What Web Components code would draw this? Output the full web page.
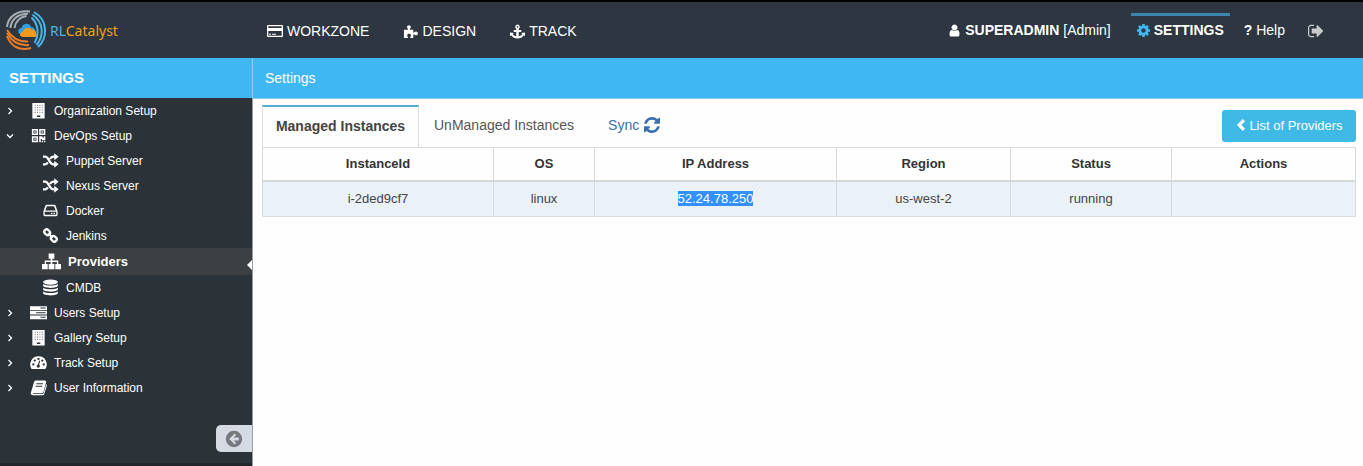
<!DOCTYPE html>
<html lang="en">
<head>
<meta charset="utf-8">
<meta name="viewport" content="width=device-width, initial-scale=1">
<title>RLCatalyst - Settings</title>
<style>
  body { margin: 0; font-family: "Liberation Sans", Arial, sans-serif; font-size: 13px; color: #333; background: #fefefe; }
</style>
</head>
<body>
<app-shell>
  <app-header slot="header">
    <nav-item icon="card">WORKZONE</nav-item>
    <nav-item icon="puzzle">DESIGN</nav-item>
    <nav-item icon="anchor">TRACK</nav-item>
    <nav-item slot="user" icon="user"><b>SUPERADMIN</b> [Admin]</nav-item>
    <nav-item slot="user" icon="cog" active><b>SETTINGS</b></nav-item>
    <nav-item slot="user"><b>?</b> Help</nav-item>
    <nav-item slot="user" icon="signout" label="Log out"></nav-item>
  </app-header>
  <side-menu slot="side" heading="SETTINGS">
    <side-item arrow="right" icon="building">Organization Setup</side-item>
    <side-item arrow="down" icon="qrcode">DevOps Setup</side-item>
    <side-item level="2" icon="random">Puppet Server</side-item>
    <side-item level="2" icon="random">Nexus Server</side-item>
    <side-item level="2" icon="hdd">Docker</side-item>
    <side-item level="2" icon="chain">Jenkins</side-item>
    <side-item level="2" icon="sitemap" active>Providers</side-item>
    <side-item level="2" icon="database">CMDB</side-item>
    <side-item arrow="right" icon="server">Users Setup</side-item>
    <side-item arrow="right" icon="building">Gallery Setup</side-item>
    <side-item arrow="right" icon="gauge">Track Setup</side-item>
    <side-item arrow="right" icon="book">User Information</side-item>
  </side-menu>
  <page-ribbon>Settings</page-ribbon>
  <instances-panel></instances-panel>
</app-shell>

<script>
const ICONS = {
  user: ['128 64 1536 1664', '<path d="M1536 1399q0 109-62.5 187t-150.5 78h-854q-88 0-150.5-78t-62.5-187q0-85 8.5-160.5t31.5-152 58.5-131 94-89 134.5-34.5q131 128 313 128t313-128q76 0 134.5 34.5t94 89 58.5 131 31.5 152 8.5 160.5zm-256-887q0 159-112.5 271.5t-271.5 112.5-271.5-112.5-112.5-271.5 112.5-271.5 271.5-112.5 271.5 112.5 112.5 271.5z"/>'],
  cog: ['128 128 1536 1536', '<path d="M1152 896q0-106-75-181t-181-75-181 75-75 181 75 181 181 75 181-75 75-181zm512-109v222q0 12-8 23t-20 13l-185 28q-19 54-39 91 35 50 107 138 10 12 10 25t-9 23q-27 37-99 108t-94 71q-12 0-26-9l-138-108q-44 23-91 38-16 136-29 186-7 28-36 28h-222q-14 0-24.5-8.5t-11.5-21.5l-28-184q-49-16-90-37l-141 107q-10 9-25 9-14 0-25-11-126-114-165-168-7-10-7-23 0-12 8-23 15-21 51-66.5t54-70.5q-27-50-41-99l-183-27q-13-2-21-12.5t-8-23.5v-222q0-12 8-23t19-13l186-28q14-46 39-92-40-57-107-138-10-12-10-24 0-10 9-23 26-36 98.5-107.5t94.5-71.5q13 0 26 10l138 107q44-23 91-38 16-136 29-186 7-28 36-28h222q14 0 24.5 8.5t11.5 21.5l28 184q49 16 90 37l142-107q9-9 24-9 13 0 25 10 129 119 165 170 7 8 7 22 0 12-8 23-15 21-51 66.5t-54 70.5q26 50 41 98l183 28q13 2 21 12.5t8 23.5z"/>'],
  refresh: ['128 128 1536 1536', '<path d="M1639 1056q0 5-1 7-64 268-268 434.5t-478 166.5q-146 0-282.5-55t-243.5-157l-129 129q-19 19-45 19t-45-19-19-45v-448q0-26 19-45t45-19h448q26 0 45 19t19 45-19 45l-137 137q71 66 161 102t187 36q134 0 250-65t186-179q11-17 53-117 8-23 30-23h192q13 0 22.5 9.5t9.5 22.5zm25-800v448q0 26-19 45t-45 19h-448q-26 0-45-19t-19-45 19-45l138-138q-148-137-349-137-134 0-250 65t-186 179q-11 17-53 117-8 23-30 23h-199q-13 0-22.5-9.5t-9.5-22.5v-7q65-268 270-434.5t480-166.5q146 0 284 55.5t245 156.5l130-129q19-19 45-19t45 19 19 45z"/>'],
  signout: ['64 64 1664 1664', '<path d="M704 1440q0 4 1 20t.5 26.5-3 23.5-10 19.5-20.5 6.5h-320q-119 0-203.5-84.5t-84.5-203.5v-704q0-119 84.5-203.5t203.5-84.5h320q13 0 22.5 9.5t9.5 22.5q0 4 1 20t.5 26.5-3 23.5-10 19.5-20.5 6.5h-320q-66 0-113 47t-47 113v704q0 66 47 113t113 47h312l11.5 1 11.5 3 8 5.5 7 9 2 13.5zm928-544q0 26-19 45l-544 544q-19 19-45 19t-45-19-19-45v-288h-448q-26 0-45-19t-19-45v-384q0-26 19-45t45-19h448v-288q0-26 19-45t45-19 45 19l544 544q19 19 19 45z"/>'],
  card: ['0 0 16 16', '<path fill-rule="evenodd" d="M1 2h14a1 1 0 0 1 1 1v10a1 1 0 0 1-1 1H1a1 1 0 0 1-1-1V3a1 1 0 0 1 1-1zm.3 1.200v1.800h13.400V3.200zM1.300 8v4.800h13.400V8zM2 10.800h2v1H2zm3 0h4v1H5z"/>'],
  puzzle: ['0 0 16 16', '<path d="M1 6h4.500C5.400 5 4.300 4.500 4.300 3.200 4.300 2 5.200 1.200 6.300 1.200s2 .8 2 2C8.300 4.500 7.300 5 7.200 6H11v3.200c1.200 0 1.500-1.200 2.900-1.200 1.100 0 2 .8 2 2s-.9 2.100-2 2.100c-1.400 0-1.700-1.200-2.900-1.200V14.800H7.600c0-1.300.9-1.500.9-2.600 0-1-.9-1.700-2-1.700s-2 .7-2 1.700c0 1.100.9 1.300.9 2.600H1z"/>'],
  anchor: ['0 0 16 16', '<path fill-rule="evenodd" d="M8 .5a2.500 2.500 0 0 1 1.300 4.600V6.500H12v1.900H9.300v4.700c1.700-.3 3.100-1.100 3.800-2.200l-1.200-1.200L16 9v4.100l-1.200-1.200C13.400 14 10.900 15.500 8 15.500S2.600 14 1.200 11.900L0 13.100V9l4.100.7-1.200 1.200c.7 1.100 2.100 1.900 3.800 2.200V8.400H4V6.500h2.700V5.100A2.500 2.500 0 0 1 8 .5zm0 1.600a.9.9 0 1 0 0 1.800.9.9 0 0 0 0-1.800z"/>'],
  left: ['0 0 10 14', '<path d="M7 0 9.700 2.700 5.500 7l4.200 4.300L7 14 .3 7z"/>'],
  aright: ['0 0 8 8', '<path d="M2.500 1 5.500 4 2.500 7" fill="none" stroke="currentColor" stroke-width="1.300"/>'],
  adown: ['0 0 8 8', '<path d="M1 2.500 4 5.500 7 2.500" fill="none" stroke="currentColor" stroke-width="1.300"/>'],
  building: ['0 0 18 18', '<path fill-rule="evenodd" d="M2.500 1h13v16.500h-13zM7.300 14.300v1.700h3.600v-1.700z"/><path d="M5 3.500h9M5 6h9M5 8.500h9M5 11h9" stroke="#2b3339" stroke-width=".8" stroke-dasharray="1 1.500"/>'],
  qrcode: ['0 0 18 18', '<path fill-rule="evenodd" d="M2 2h6.500v6.500H2zm1.600 1.600v3.300h3.300V3.600zM9.700 2h6.500v6.500H9.700zm1.600 1.600v3.300h3.300V3.600zM2 9.700h6.500v6.500H2zm1.600 1.600v3.300h3.300v-3.300zM4.500 4.500h1.500v1.500H4.500zm7.700 0h1.500v1.500h-1.500zM4.500 12.200h1.500v1.500H4.500zM9.700 9.700h3.500v1.300h1.500V9.700h1.500v4.400h-3.600v-1.300h-1.200v3.400H9.700zm2.600 5.100h1.400v1.400h-1.400zm2.400 0h1.500v1.400h-1.500z"/>'],
  random: ['0 0 18 18', '<path d="M1 5h2.500c3.500 0 4.500 8 8.500 8h2M1 13h2.500c1.200 0 2-.8 2.700-2M8.500 7.500C9.300 6 10.400 5 12 5h2" fill="none" stroke="currentColor" stroke-width="2.400"/><path d="M13 1.200 17.600 5 13 8.800zM13 9.200l4.600 3.800-4.600 3.800z"/>'],
  hdd: ['0 0 18 18', '<path fill-rule="evenodd" d="M5 3h8c.7 0 1.200.3 1.400.9l1.900 5.400c.1.400.2.700.2 1.100v3.100c0 .8-.7 1.500-1.500 1.500H3c-.8 0-1.500-.7-1.500-1.500v-3.100c0-.4.1-.7.2-1.100l1.900-5.400C3.800 3.300 4.300 3 5 3zm.2 1.400L3.500 9h11l-1.700-4.600zM2.900 10.400v3.200h12.200v-3.200zM9.500 11.300h1.500v1.400H9.500zm2.700 0h1.500v1.400h-1.500z"/>'],
  chain: ['0 0 18 18', '<g fill="none" stroke="currentColor" stroke-width="2.400"><rect x="2.200" y="3.100" width="6.600" height="5" rx="2.400" transform="rotate(45 5.500 5.600)"/><rect x="9.200" y="9.900" width="6.600" height="5" rx="2.400" transform="rotate(45 12.500 12.400)"/><path d="M6.500 6.500l5 5" stroke-width="2"/></g>'],
  sitemap: ['0 0 18 18', '<path d="M6.300 1.500h5.400v5H9.800v1.600h5.600v3.200H18v5h-5.400v-5h1.500V9.500H9.800v1.800h1.900v5H6.300v-5h1.900V9.500H3.900v1.800h1.500v5H0v-5h2.600V8.100h5.600V6.500H6.300z"/>'],
  database: ['0 0 18 18', '<ellipse cx="9" cy="3.300" rx="7.800" ry="2.700"/><path d="M1.200 5.200c3.500 2.300 12.100 2.300 15.600 0v2c-1 3-14.600 3-15.600 0zM1.200 9.200c3.500 2.300 12.100 2.300 15.600 0v2c-1 3-14.600 3-15.600 0zM1.200 13.200c3.500 2.300 12.100 2.300 15.600 0v2c-1 3-14.600 3-15.600 0z"/>'],
  server: ['0 0 18 18', '<path fill-rule="evenodd" d="M0 2.300h18v4H0zm11 1.500v1h5.500v-1zM0 7.200h18v4H0zm6.500 1.500v1h10v-1zM0 12.100h18v4H0zm11 1.500v1h5.500v-1z"/>'],
  gauge: ['0 0 18 18', '<path fill-rule="evenodd" d="M9 2.500a8.600 8.600 0 0 1 7.300 13.300H1.700A8.600 8.600 0 0 1 9 2.500z"/><g fill="#2b3339"><circle cx="3.500" cy="11" r="1.200"/><circle cx="5" cy="7" r="1.200"/><circle cx="9" cy="5.200" r="1.200"/><circle cx="13" cy="7" r="1.200"/><circle cx="14.500" cy="11" r="1.200"/><circle cx="8.800" cy="12.800" r="1.700"/><path d="M8.300 12 9.700 7l1 .3-1.200 5z"/></g>'],
  book: ['0 0 18 18', '<path fill-rule="evenodd" d="M6.500 1.500h9.300c1 .2 1.600.9 1.300 2l-2.700 10c-.3 1-1 1.500-2 1.500H3.200c-.6.300-.3.900.5.900h9.500c.6 0 1-.3 1.200-.8l2.800-9.500c.7.400.8.900.6 1.500l-2.700 8.700c-.3.900-1 1.500-2 1.500H3.300c-1.700 0-2.900-1.300-2.400-2.700L4.200 3.400c.4-1.200 1.100-1.900 2.300-1.900zM7 4.500l-.4 1.100h7l.4-1.100zM6.200 7.200l-.4 1.100h7l.4-1.100z"/>'],
  back: ['0 0 18 18', '<path fill-rule="evenodd" d="M9 .8a8.200 8.200 0 1 1 0 16.400A8.200 8.200 0 0 1 9 .8zM9.700 3.500 4.200 9l5.500 5.500 1.500-1.500-2.600-2.600h5.200V7.600H8.600L11.200 5z"/>']
};

const define = (name, render) => customElements.define(name, class extends HTMLElement {
  connectedCallback() {
    if (this.shadowRoot) return;
    this.attachShadow({ mode: 'open' }).innerHTML = render(this);
  }
});

define('ui-icon', el => {
  const [box, art] = ICONS[el.getAttribute('name')];
  return `<style>
    :host { display: inline-flex; flex: none; width: var(--icon, 16px); height: var(--icon, 16px); }
    svg { width: 100%; height: 100%; fill: currentColor; }
  </style><svg viewBox="${box}" aria-hidden="true">${art}</svg>`;
});

define('app-shell', () => `<style>
    :host { display: grid; grid-template: auto 1fr / 253px 1fr; min-height: 100vh; }
    .top { grid-column: 1 / -1; }
    .side { display: grid; background: #2b3339; border-right: 1px solid #98a0a4; box-sizing: border-box; }
    main { min-width: 0; }
  </style>
  <div class="top"><slot name="header"></slot></div>
  <div class="side"><slot name="side"></slot></div>
  <main><slot></slot></main>`);

define('brand-logo', () => `<style>
    :host { display: block; }
    a { display: flex; align-items: center; gap: 3px; color: #f0a01e; text-decoration: none; font: 14px "Noto Sans", sans-serif; }
    svg { width: 42px; height: 42px; }
    span { color: #4db4e8; }
  </style>
  <a href="#"><svg viewBox="0 0 42 42" aria-hidden="true" fill="none" stroke-width="2">
    <g stroke="#a9afb5"><path d="M2 18C3 8 12 1 25 2.500"/><path d="M5.500 19C6 11 12 5 23 4.800"/><path d="M9.500 19c.8-6 5-11 12-12"/></g>
    <g stroke="#48b5ea"><path d="M29 3c14 8 14 26 4 35"/><path d="M27.500 5.500c11 8 12 21 4 30.500"/><path d="M26.500 8.500c7 7 8 17 3 25.500"/></g>
    <g stroke="#ef7d23"><path d="M2 27c4 11 13 15 24 12"/><path d="M2 24c5 9 12 13 22 12"/><path d="M2 21C7 29 14 33 23 32.500"/></g>
    <path fill="#2e9fe0" d="M15 25c-3-1-2-6 1.500-6 1-5 8-6 9.500-1 3 0 4 2 4 4l-10 3z"/>
    <path fill="#f29a1f" d="M18 28c-4 0-4-5 0-5.500 1-4 7-5 8.500-1.500 3-1 5 1 4.500 3.500 1.500 1.500.5 3.500-1.500 3.500z"/>
  </svg><div><span>RL</span>Catalyst</div></a>`);

define('app-header', () => `<style>
    :host { display: flex; align-items: stretch; height: 58px; box-sizing: border-box; border-top: 2px solid #000; background: #2d3641; color: #fff; font-size: 14px; }
    brand-logo { width: 257px; padding: 7px 0 0 5px; box-sizing: border-box; }
    nav { display: flex; }
    nav.main { gap: 14px; }
    nav.user { margin-left: auto; padding-right: 29px; gap: 8px; }
  </style>
  <brand-logo></brand-logo>
  <nav class="main" aria-label="Main"><slot></slot></nav>
  <nav class="user" aria-label="Account"><slot name="user"></slot></nav>`);

define('nav-item', el => {
  const icon = el.getAttribute('icon'), label = el.getAttribute('label');
  return `<style>
    :host { display: block; padding-top: 11px; }
    a { display: flex; align-items: center; gap: 4px; padding: 5px 10px 0; color: #fff; text-decoration: none; line-height: 20px; white-space: pre; border-top: 3px solid transparent; }
    :host([slot]) a { padding: 4px 6px 0; }
    :host([slot]) ui-icon { --icon: 13px; }
    :host([icon=puzzle]) ui-icon, :host([icon=anchor]) ui-icon { --icon: 15px; }
    :host([active]) a { border-color: #3a87ad; }
    :host([active]) ui-icon { color: #3fb7f2; }
    :host([icon=signout]) { padding-left: 3px; }
    :host([icon=signout]) a { padding: 7px 6px 0; color: #c8cbce; }
    :host([icon=signout]) ui-icon { --icon: 16px; }
    :host([icon=user]) { margin-right: 6px; }
  </style>
  <a href="#" ${label ? `aria-label="${label}"` : ''}>${icon ? `<ui-icon name="${icon}"></ui-icon>` : ''}<span><slot></slot></span></a>`;
});

define('side-menu', el => `<style>
    :host { display: flex; flex-direction: column; border-bottom: 3px solid #20262b; }
    h2 { margin: 0 -1px 0 0; padding-left: 9px; height: 40px; line-height: 40px; font-size: 15px; color: #fff; background: #3fb7f2; border-right: 1px solid #8cd2f5; }
    button { margin: 25px 0 10px auto; width: 36px; height: 27px; padding: 0; display: grid; place-items: center; border: 0; border-radius: 5px 0 0 5px; background: #d6dae2; color: #75797c; }
  </style>
  <h2>${el.getAttribute('heading')}</h2>
  <nav aria-label="Settings"><slot></slot></nav>
  <button type="button" aria-label="Collapse menu"><ui-icon name="back" style="--icon: 18px"></ui-icon></button>`);

define('side-item', el => {
  const arrow = el.getAttribute('arrow');
  return `<style>
    :host { display: block; }
    a { position: relative; display: flex; align-items: center; height: 25px; color: #fff; text-decoration: none; font-size: 12px; padding-left: 6px; }
    .arrow { --icon: 8px; margin-right: 16px; }
    .main { --icon: 17px; margin-right: 7px; }
    :host([level="2"]) a { padding-left: 42px; }
    :host([active]) a { height: 27px; background: #3c4042; font-size: 13px; font-weight: bold; }
    :host([active]) .main { --icon: 19px; }
    :host([active]) a::after { content: ""; position: absolute; right: 0; bottom: 5px; border: 5px solid transparent; border-right-color: #fff; border-left: 0; }
  </style>
  <a href="#">${arrow ? `<ui-icon class="arrow" name="a${arrow}"></ui-icon>` : ''}<ui-icon class="main" name="${el.getAttribute('icon')}"></ui-icon><slot></slot></a>`;
});

define('page-ribbon', () => `<style>
    :host { display: block; height: 40px; line-height: 40px; padding-left: 12px; background: #3fb7f2; color: #fff; font-size: 14px; border-bottom: 1px solid #8fcdec; }
  </style><slot></slot>`);

define('instances-panel', () => `<style>
    :host { display: block; padding: 6px 7px 0 9px; }
    .bar { display: flex; align-items: center; height: 42px; font-size: 14px; }
    a { display: flex; align-items: center; justify-content: center; color: #555; text-decoration: none; line-height: 16px; padding-bottom: 2px; }
    a.current { box-sizing: border-box; width: 157px; height: 42px; font-weight: bold; color: #444; border: 1px solid #ddd; border-top: 2px solid #57aed1; border-bottom: 0; }
    a.other { padding-left: 15px; padding-right: 15px; }
    a.sync { color: #3a6fae; gap: 5px; padding-left: 19px; }
    button { margin-left: auto; display: flex; align-items: center; justify-content: center; gap: 2px; height: 32px; width: 134px; padding: 0 0 2px; border: 0; border-radius: 3px; background: #3fb9e6; color: #fff; font: 13px "Liberation Sans", Arial, sans-serif; }
    table { width: 100%; table-layout: fixed; border-collapse: collapse; text-align: center; }
    th, td { border: 1px solid #d8dcdc; padding: 0; line-height: 16px; }
    th { height: 32px; border-bottom: 2px solid #d3d9d9; color: #333; }
    td { height: 34px; background: #ebf1f8; color: #444; }
    mark { background: #3390ff; color: #fff; }
  </style>
  <div class="bar">
    <a class="current" href="#">Managed Instances</a>
    <a class="other" href="#">UnManaged Instances</a>
    <a class="sync" href="#">Sync <ui-icon name="refresh"></ui-icon></a>
    <button type="button"><ui-icon name="left" style="--icon: 12px"></ui-icon>List of Providers</button>
  </div>
  <table>
    <colgroup><col style="width:231px"><col style="width:101px"><col style="width:242px"><col style="width:174px"><col style="width:161px"><col style="width:184px"></colgroup>
    <thead><tr><th>InstanceId</th><th>OS</th><th>IP Address</th><th>Region</th><th>Status</th><th>Actions</th></tr></thead>
    <tbody><tr><td>i-2ded9cf7</td><td>linux</td><td><mark>52.24.78.250</mark></td><td>us-west-2</td><td>running</td><td></td></tr></tbody>
  </table>`);
</script>
</body>
</html>
